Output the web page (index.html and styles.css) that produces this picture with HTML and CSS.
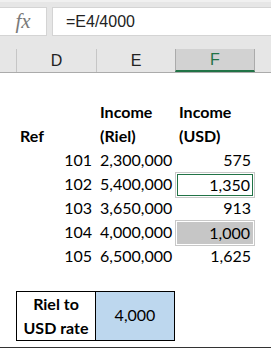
FILE: index.html
```html
<!DOCTYPE html>
<html lang="en">
<head>
    <meta charset="UTF-8">
    <meta name="viewport" content="width=device-width, initial-scale=1.0">
    <title>Riel to USD</title>
    <link rel="stylesheet" href="styles.css">
</head>
<body>
    <div class="toolbar">
        <div class="formula-bar">
            <div class="fx">fx</div>
            <div class="formula">=E4/4000</div>
        </div>
        <div class="col-heads">
            <div class="col-head corner"></div>
            <div class="col-head">D</div>
            <div class="col-head">E</div>
            <div class="col-head active">F</div>
            <div class="col-head rest"></div>
        </div>
    </div>

    <div class="sheet">
        <div class="row spacer-top"></div>
        <div class="row head">
            <div></div>
            <div class="cell bold">Ref</div>
            <div class="cell bold">Income<br>(Riel)</div>
            <div class="cell bold">Income<br>(USD)</div>
            <div></div>
        </div>
        <div class="row">
            <div></div>
            <div class="cell num">101</div>
            <div class="cell num">2,300,000</div>
            <div class="cell num">575</div>
            <div></div>
        </div>
        <div class="row">
            <div></div>
            <div class="cell num">102</div>
            <div class="cell num">5,400,000</div>
            <div class="cell picked"><span class="num">1,350</span></div>
            <div></div>
        </div>
        <div class="row">
            <div></div>
            <div class="cell num">103</div>
            <div class="cell num">3,650,000</div>
            <div class="cell num">913</div>
            <div></div>
        </div>
        <div class="row">
            <div></div>
            <div class="cell num">104</div>
            <div class="cell num">4,000,000</div>
            <div class="cell shaded"><span class="num">1,000</span></div>
            <div></div>
        </div>
        <div class="row">
            <div></div>
            <div class="cell num">105</div>
            <div class="cell num">6,500,000</div>
            <div class="cell num">1,625</div>
            <div></div>
        </div>
        <div class="row spacer"></div>
        <div class="row rate">
            <div></div>
            <div class="cell rate-label bold">Riel to<br>USD rate</div>
            <div class="cell rate-value">4,000</div>
            <div></div>
            <div></div>
        </div>
    </div>
    <div class="bottom-line"></div>
</body>
</html>
```

FILE: styles.css
```css
body {
    margin: 0;
    background: #fff;
    font-family: Lato, "Open Sans", sans-serif;
    color: #000;
    width: 271px;
    height: 348px;
    overflow: hidden;
    position: relative;
}
.toolbar {
    background: #e6e6e6;
    border-top: 2px solid #f0f0f0;
}
.formula-bar {
    display: flex;
    padding-top: 5px;
    height: 29px;
    margin-bottom: 13px;
}
.fx {
    width: 47px;
    background: #fff;
    border: 1px solid #d4d4d4;
    border-left: none;
    box-sizing: border-box;
    font-family: "Liberation Serif", serif;
    font-style: italic;
    font-size: 21px;
    color: #7a7a7a;
    text-align: center;
    line-height: 26px;
}
.formula {
    flex: 1;
    margin-left: 5px;
    background: #fff;
    border: 1px solid #d4d4d4;
    border-right: none;
    box-sizing: border-box;
    font-family: "Liberation Sans", sans-serif;
    font-size: 16px;
    color: #222;
    line-height: 27px;
    padding-left: 13px;
}
.col-heads {
    display: grid;
    grid-template-columns: 16px 80px 79px 80px 1fr;
    height: 23px;
    border-bottom: 1px solid #ababab;
}
.col-head {
    border-left: 1px solid #c6c6c6;
    font-family: "Liberation Sans", sans-serif;
    font-size: 16px;
    color: #222;
    text-align: center;
    line-height: 23px;
}
.col-head.corner {
    border-left: none;
}
.col-head.active {
    background: #d2d2d2;
    color: #217346;
    border-left-color: #ababab;
    border-right: 1px solid #ababab;
    border-bottom: 2px solid #217346;
    line-height: 21px;
}
.col-head.rest {
    border-left: none;
}
.sheet {
    font-size: 16px;
}
.row {
    display: grid;
    grid-template-columns: 16px 80px 79px 80px 1fr;
    height: 24px;
    line-height: 24px;
}
.spacer-top {
    height: 27px;
}
.spacer {
    height: 23px;
}
.row.head {
    height: 48px;
}
.cell {
    padding: 0 4px;
    white-space: nowrap;
}
.head .cell {
    display: flex;
    align-items: flex-end;
    padding-bottom: 2px;
    line-height: 24px;
}
.bold {
    font-weight: bold;
}
.num {
    text-align: right;
}
.picked, .shaded {
    border: 1px solid #c8c8c8;
    padding: 1px;
    display: flex;
}
.picked .num, .shaded .num {
    flex: 1;
    line-height: 20px;
    padding-right: 2px;
}
.picked .num {
    border: 1px solid #217346;
}
.shaded .num {
    background: #c6c6c6;
    border: 1px solid #c6c6c6;
}
.row.rate {
    height: 48px;
}
.rate-label {
    border: 1px solid #000;
    text-align: center;
    white-space: normal;
}
.rate-value {
    background: #bdd7ee;
    border: 1px solid #000;
    border-left: none;
    text-align: center;
    line-height: 46px;
}
.bottom-line {
    position: absolute;
    left: 0;
    right: 0;
    top: 347px;
    height: 1px;
    background: #333;
}
```
